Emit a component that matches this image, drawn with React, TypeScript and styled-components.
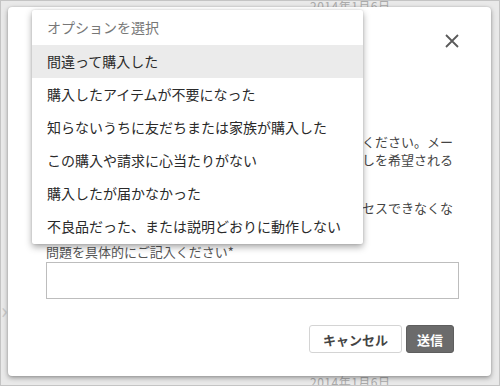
import React from "react"
import styled, { createGlobalStyle } from "styled-components"

const GlobalStyle = createGlobalStyle`
  html, body {
    margin: 0;
    padding: 0;
    background: #e8e8e8;
  }
  body {
    font-family: "Noto Sans CJK JP", "Noto Sans", sans-serif;
  }
`

const options = [
  "間違って購入した",
  "購入したアイテムが不要になった",
  "知らないうちに友だちまたは家族が購入した",
  "この購入や請求に心当たりがない",
  "購入したが届かなかった",
  "不良品だった、または説明どおりに動作しない",
]

const App = () => {
  return (
    <Frame>
      <GlobalStyle />
      <Backdrop>
        <DateText top={-4}>2014年1月6日</DateText>
        <Chevron>›</Chevron>
        <DateText top={372}>2014年1月6日</DateText>
      </Backdrop>

      <Dialog>
        <Header>
          <Title>問題を報告</Title>
          <Close aria-label="閉じる">
            <svg width="14" height="14" viewBox="0 0 14 14">
              <path d="M1 1 L13 13 M13 1 L1 13" stroke="#5a5a5a" strokeWidth="1.8" fill="none" />
            </svg>
          </Close>
        </Header>
        <SelectSlot />

        <Para>
          <Line>この購入について問題内容をできるだけ詳しくご記入ください。メー</Line>
          <Line>ルまたは電話でのご連絡など、サポートからの折り返しを希望される</Line>
          <Line short>場合はその旨もお書きください。</Line>
        </Para>
        <Para>
          <Line>ストアアカウントやお支払い方法に問題があり、アクセスできなくな</Line>
          <Line short>った場合もお知らせください。</Line>
        </Para>

        <Label>問題を具体的にご記入ください*</Label>
        <TextArea />

        <Actions>
          <Btn>キャンセル</Btn>
          <Btn primary>送信</Btn>
        </Actions>
      </Dialog>

      <Menu>
        <MenuItem muted>オプションを選択</MenuItem>
        {options.map((o, i) => (
          <MenuItem key={o} active={i === 0}>{o}</MenuItem>
        ))}
      </Menu>
    </Frame>
  )
}

export default App

const Frame = styled.div`
  position: relative;
  width: 500px;
  height: 386px;
  box-sizing: border-box;
  border: 1px solid #c4c4c4;
  background: #e9e9e9;
  overflow: hidden;
`
const Backdrop = styled.div`
  position: absolute;
  inset: 0;
`
const DateText = styled.div<{ top: number }>`
  position: absolute;
  left: 309px;
  top: ${(p) => p.top}px;
  font-size: 12px;
  color: #ababab;
  letter-spacing: 0.5px;
`
const Chevron = styled.div`
  position: absolute;
  left: 0px;
  top: 292px;
  font-size: 22px;
  color: #c8c8c8;
`
const Dialog = styled.div`
  position: absolute;
  left: 7px;
  top: 6px;
  width: 483px;
  height: 369px;
  box-sizing: border-box;
  padding: 20px 32px 22px 38px;
  background: #fff;
  border-radius: 4px;
  box-shadow: 0 2px 5px rgba(0, 0, 0, 0.35), 0 0 2px rgba(0, 0, 0, 0.15);
  display: flex;
  flex-direction: column;
`
const Header = styled.div`
  height: 28px;
  display: flex;
  align-items: center;
  justify-content: space-between;
`
const Title = styled.div`
  font-size: 16px;
  color: #333;
`
const Close = styled.div`
  width: 14px;
  height: 14px;
  display: flex;
`
const SelectSlot = styled.div`
  height: 78px;
`
const Para = styled.div`
  margin-right: 6px;
  margin-bottom: 12px;
  font-size: 13px;
  line-height: 18px;
  color: #444;
`
const Line = styled.div<{ short?: boolean }>`
  white-space: nowrap;
  text-align: ${(p) => (p.short ? "left" : "right")};
`
const Label = styled.div`
  margin-top: -4px;
  font-size: 13px;
  line-height: 18px;
  color: #555;
`
const TextArea = styled.div`
  margin-top: 1px;
  height: 37px;
  box-sizing: border-box;
  border: 1px solid #bdbdbd;
  background: #fff;
`
const Actions = styled.div`
  margin-top: 26px;
  margin-right: 5px;
  display: flex;
  justify-content: flex-end;
  gap: 4px;
`
const Btn = styled.div<{ primary?: boolean }>`
  height: 28px;
  box-sizing: border-box;
  padding: 0 ${(p) => (p.primary ? 10 : 13)}px;
  display: flex;
  align-items: center;
  font-size: 13px;
  font-weight: 700;
  border-radius: 3px;
  color: ${(p) => (p.primary ? "#fff" : "#444")};
  background: ${(p) => (p.primary ? "#6b6b6b" : "#fff")};
  border: 1px solid ${(p) => (p.primary ? "#5e5e5e" : "#d4d4d4")};
`
const Menu = styled.div`
  position: absolute;
  left: 31px;
  top: 9px;
  width: 331px;
  padding: 0 0 1px;
  background: #fff;
  border-radius: 2px;
  box-shadow: 0 3px 7px rgba(0, 0, 0, 0.35), 0 0 2px rgba(0, 0, 0, 0.15);
`
const MenuItem = styled.div<{ muted?: boolean; active?: boolean }>`
  height: ${(p) => (p.muted ? 35 : 33)}px;
  line-height: ${(p) => (p.muted ? 35 : 33)}px;
  padding-left: 15px;
  font-size: 14px;
  white-space: nowrap;
  color: ${(p) => (p.muted ? "#777" : "#2a2a2a")};
  background: ${(p) => (p.active ? "#ebebeb" : "transparent")};
`
